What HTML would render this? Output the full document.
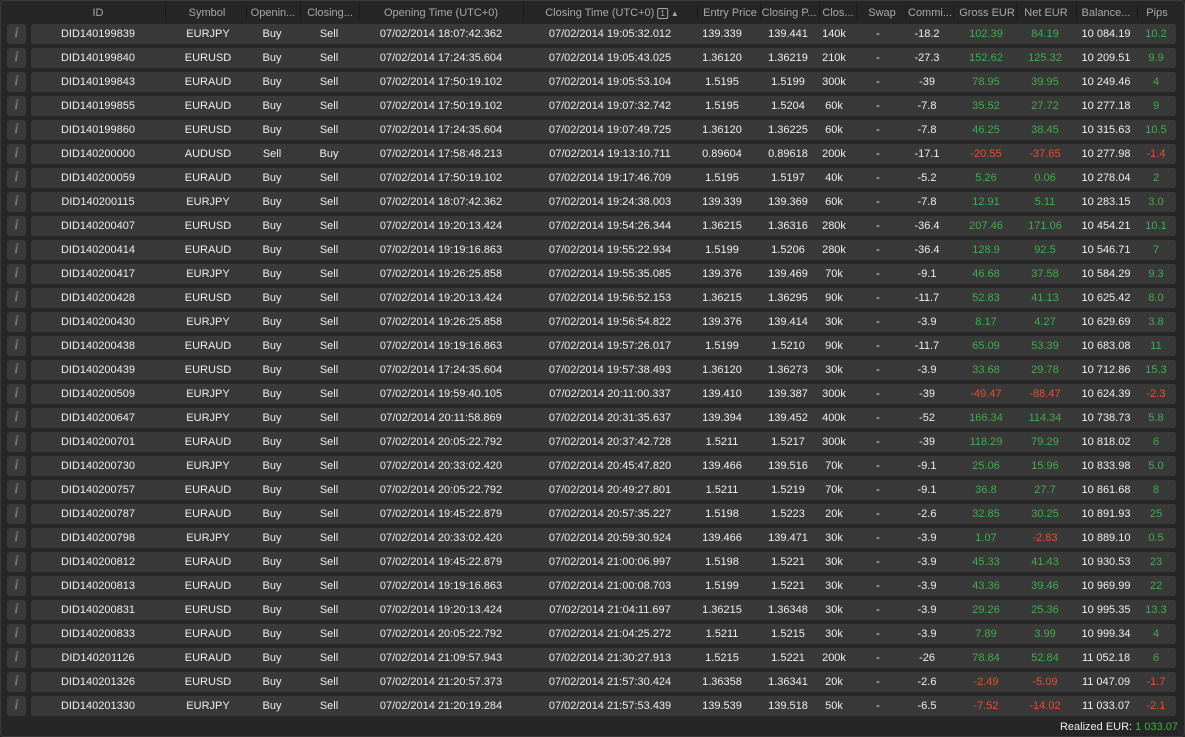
<!DOCTYPE html>
<html><head><meta charset="utf-8"><style>
body{margin:0;width:1185px;height:737px;background:#262626;font-family:"Liberation Sans",sans-serif;font-size:11px;color:#eee;overflow:hidden;position:relative}
.frame{position:absolute;left:0;top:0;width:1183px;height:735px;border:1px solid #3a3a3a;border-radius:4px}
.hdr{position:absolute;top:0;left:0;width:1185px;height:24px;color:#a8a8a8}
.hdr span{position:absolute;top:7px;transform:translateX(-50%);white-space:nowrap}
.sep{position:absolute;top:4px;width:1px;height:16px;background:#1a1a1a}
.r{position:absolute;left:0;width:1185px;height:20px}
.r i{position:absolute;left:7px;top:0;width:19px;height:20px;background:#3a3a3a;border-radius:3px;color:#777;font-family:"Liberation Serif",serif;font-size:14px;font-weight:bold;text-align:center;line-height:20px}
.r b{position:absolute;left:31px;top:0;width:1145px;height:20px;background:#393939;border-radius:3px}
.r span{position:absolute;top:4px;transform:translateX(-50%);white-space:nowrap}
.r span:nth-of-type(1){left:98px}.r span:nth-of-type(2){left:208px}.r span:nth-of-type(3){left:272px}.r span:nth-of-type(4){left:329px}.r span:nth-of-type(5){left:441px}.r span:nth-of-type(6){left:610px}.r span:nth-of-type(7){left:722px}.r span:nth-of-type(8){left:788px}.r span:nth-of-type(9){left:834px}.r span:nth-of-type(10){left:878px}.r span:nth-of-type(11){left:927px}.r span:nth-of-type(12){left:986px}.r span:nth-of-type(13){left:1045px}.r span:nth-of-type(14){left:1106px}.r span:nth-of-type(15){left:1156px}
.g{color:#3fae49}.d{color:#e5502f}
.foot{position:absolute;top:721px;right:7px;color:#eee}
</style></head><body>
<div class="frame"></div>
<div class="hdr">
<span style="left:98px">ID</span><div class="sep" style="left:165px"></div>
<span style="left:207px">Symbol</span><div class="sep" style="left:246px"></div>
<span style="left:273px">Openin...</span><div class="sep" style="left:300px"></div>
<span style="left:330px">Closing...</span><div class="sep" style="left:359px"></div>
<span style="left:441px">Opening Time (UTC+0)</span><div class="sep" style="left:523px"></div>
<span style="left:612px">Closing Time (UTC+0) <span style="position:relative;transform:none;top:0;border:1px solid #aaa;border-radius:2px;font-size:8px;padding:0 2px">1</span> <span style="position:relative;transform:none;top:0;font-size:8px">▲</span></span><div class="sep" style="left:697px"></div>
<span style="left:730px">Entry Price</span><div class="sep" style="left:760px"></div>
<span style="left:789px">Closing P...</span><div class="sep" style="left:819px"></div>
<span style="left:838px">Clos...</span><div class="sep" style="left:856px"></div>
<span style="left:882px">Swap</span><div class="sep" style="left:905px"></div>
<span style="left:930px">Commi...</span><div class="sep" style="left:953px"></div>
<span style="left:987px">Gross EUR</span><div class="sep" style="left:1016px"></div>
<span style="left:1046px">Net EUR</span><div class="sep" style="left:1076px"></div>
<span style="left:1106px">Balance...</span><div class="sep" style="left:1137px"></div>
<span style="left:1157px">Pips</span>
</div>
<div class="r" style="top:24px"><i>i</i><b></b><span>DID140199839</span><span>EURJPY</span><span>Buy</span><span>Sell</span><span>07/02/2014 18:07:42.362</span><span>07/02/2014 19:05:32.012</span><span>139.339</span><span>139.441</span><span>140k</span><span>-</span><span>-18.2</span><span class="g">102.39</span><span class="g">84.19</span><span>10 084.19</span><span class="g">10.2</span></div>
<div class="r" style="top:48px"><i>i</i><b></b><span>DID140199840</span><span>EURUSD</span><span>Buy</span><span>Sell</span><span>07/02/2014 17:24:35.604</span><span>07/02/2014 19:05:43.025</span><span>1.36120</span><span>1.36219</span><span>210k</span><span>-</span><span>-27.3</span><span class="g">152.62</span><span class="g">125.32</span><span>10 209.51</span><span class="g">9.9</span></div>
<div class="r" style="top:72px"><i>i</i><b></b><span>DID140199843</span><span>EURAUD</span><span>Buy</span><span>Sell</span><span>07/02/2014 17:50:19.102</span><span>07/02/2014 19:05:53.104</span><span>1.5195</span><span>1.5199</span><span>300k</span><span>-</span><span>-39</span><span class="g">78.95</span><span class="g">39.95</span><span>10 249.46</span><span class="g">4</span></div>
<div class="r" style="top:96px"><i>i</i><b></b><span>DID140199855</span><span>EURAUD</span><span>Buy</span><span>Sell</span><span>07/02/2014 17:50:19.102</span><span>07/02/2014 19:07:32.742</span><span>1.5195</span><span>1.5204</span><span>60k</span><span>-</span><span>-7.8</span><span class="g">35.52</span><span class="g">27.72</span><span>10 277.18</span><span class="g">9</span></div>
<div class="r" style="top:120px"><i>i</i><b></b><span>DID140199860</span><span>EURUSD</span><span>Buy</span><span>Sell</span><span>07/02/2014 17:24:35.604</span><span>07/02/2014 19:07:49.725</span><span>1.36120</span><span>1.36225</span><span>60k</span><span>-</span><span>-7.8</span><span class="g">46.25</span><span class="g">38.45</span><span>10 315.63</span><span class="g">10.5</span></div>
<div class="r" style="top:144px"><i>i</i><b></b><span>DID140200000</span><span>AUDUSD</span><span>Sell</span><span>Buy</span><span>07/02/2014 17:58:48.213</span><span>07/02/2014 19:13:10.711</span><span>0.89604</span><span>0.89618</span><span>200k</span><span>-</span><span>-17.1</span><span class="d">-20.55</span><span class="d">-37.65</span><span>10 277.98</span><span class="d">-1.4</span></div>
<div class="r" style="top:168px"><i>i</i><b></b><span>DID140200059</span><span>EURAUD</span><span>Buy</span><span>Sell</span><span>07/02/2014 17:50:19.102</span><span>07/02/2014 19:17:46.709</span><span>1.5195</span><span>1.5197</span><span>40k</span><span>-</span><span>-5.2</span><span class="g">5.26</span><span class="g">0.06</span><span>10 278.04</span><span class="g">2</span></div>
<div class="r" style="top:192px"><i>i</i><b></b><span>DID140200115</span><span>EURJPY</span><span>Buy</span><span>Sell</span><span>07/02/2014 18:07:42.362</span><span>07/02/2014 19:24:38.003</span><span>139.339</span><span>139.369</span><span>60k</span><span>-</span><span>-7.8</span><span class="g">12.91</span><span class="g">5.11</span><span>10 283.15</span><span class="g">3.0</span></div>
<div class="r" style="top:216px"><i>i</i><b></b><span>DID140200407</span><span>EURUSD</span><span>Buy</span><span>Sell</span><span>07/02/2014 19:20:13.424</span><span>07/02/2014 19:54:26.344</span><span>1.36215</span><span>1.36316</span><span>280k</span><span>-</span><span>-36.4</span><span class="g">207.46</span><span class="g">171.06</span><span>10 454.21</span><span class="g">10.1</span></div>
<div class="r" style="top:240px"><i>i</i><b></b><span>DID140200414</span><span>EURAUD</span><span>Buy</span><span>Sell</span><span>07/02/2014 19:19:16.863</span><span>07/02/2014 19:55:22.934</span><span>1.5199</span><span>1.5206</span><span>280k</span><span>-</span><span>-36.4</span><span class="g">128.9</span><span class="g">92.5</span><span>10 546.71</span><span class="g">7</span></div>
<div class="r" style="top:264px"><i>i</i><b></b><span>DID140200417</span><span>EURJPY</span><span>Buy</span><span>Sell</span><span>07/02/2014 19:26:25.858</span><span>07/02/2014 19:55:35.085</span><span>139.376</span><span>139.469</span><span>70k</span><span>-</span><span>-9.1</span><span class="g">46.68</span><span class="g">37.58</span><span>10 584.29</span><span class="g">9.3</span></div>
<div class="r" style="top:288px"><i>i</i><b></b><span>DID140200428</span><span>EURUSD</span><span>Buy</span><span>Sell</span><span>07/02/2014 19:20:13.424</span><span>07/02/2014 19:56:52.153</span><span>1.36215</span><span>1.36295</span><span>90k</span><span>-</span><span>-11.7</span><span class="g">52.83</span><span class="g">41.13</span><span>10 625.42</span><span class="g">8.0</span></div>
<div class="r" style="top:312px"><i>i</i><b></b><span>DID140200430</span><span>EURJPY</span><span>Buy</span><span>Sell</span><span>07/02/2014 19:26:25.858</span><span>07/02/2014 19:56:54.822</span><span>139.376</span><span>139.414</span><span>30k</span><span>-</span><span>-3.9</span><span class="g">8.17</span><span class="g">4.27</span><span>10 629.69</span><span class="g">3.8</span></div>
<div class="r" style="top:336px"><i>i</i><b></b><span>DID140200438</span><span>EURAUD</span><span>Buy</span><span>Sell</span><span>07/02/2014 19:19:16.863</span><span>07/02/2014 19:57:26.017</span><span>1.5199</span><span>1.5210</span><span>90k</span><span>-</span><span>-11.7</span><span class="g">65.09</span><span class="g">53.39</span><span>10 683.08</span><span class="g">11</span></div>
<div class="r" style="top:360px"><i>i</i><b></b><span>DID140200439</span><span>EURUSD</span><span>Buy</span><span>Sell</span><span>07/02/2014 17:24:35.604</span><span>07/02/2014 19:57:38.493</span><span>1.36120</span><span>1.36273</span><span>30k</span><span>-</span><span>-3.9</span><span class="g">33.68</span><span class="g">29.78</span><span>10 712.86</span><span class="g">15.3</span></div>
<div class="r" style="top:384px"><i>i</i><b></b><span>DID140200509</span><span>EURJPY</span><span>Buy</span><span>Sell</span><span>07/02/2014 19:59:40.105</span><span>07/02/2014 20:11:00.337</span><span>139.410</span><span>139.387</span><span>300k</span><span>-</span><span>-39</span><span class="d">-49.47</span><span class="d">-88.47</span><span>10 624.39</span><span class="d">-2.3</span></div>
<div class="r" style="top:408px"><i>i</i><b></b><span>DID140200647</span><span>EURJPY</span><span>Buy</span><span>Sell</span><span>07/02/2014 20:11:58.869</span><span>07/02/2014 20:31:35.637</span><span>139.394</span><span>139.452</span><span>400k</span><span>-</span><span>-52</span><span class="g">166.34</span><span class="g">114.34</span><span>10 738.73</span><span class="g">5.8</span></div>
<div class="r" style="top:432px"><i>i</i><b></b><span>DID140200701</span><span>EURAUD</span><span>Buy</span><span>Sell</span><span>07/02/2014 20:05:22.792</span><span>07/02/2014 20:37:42.728</span><span>1.5211</span><span>1.5217</span><span>300k</span><span>-</span><span>-39</span><span class="g">118.29</span><span class="g">79.29</span><span>10 818.02</span><span class="g">6</span></div>
<div class="r" style="top:456px"><i>i</i><b></b><span>DID140200730</span><span>EURJPY</span><span>Buy</span><span>Sell</span><span>07/02/2014 20:33:02.420</span><span>07/02/2014 20:45:47.820</span><span>139.466</span><span>139.516</span><span>70k</span><span>-</span><span>-9.1</span><span class="g">25.06</span><span class="g">15.96</span><span>10 833.98</span><span class="g">5.0</span></div>
<div class="r" style="top:480px"><i>i</i><b></b><span>DID140200757</span><span>EURAUD</span><span>Buy</span><span>Sell</span><span>07/02/2014 20:05:22.792</span><span>07/02/2014 20:49:27.801</span><span>1.5211</span><span>1.5219</span><span>70k</span><span>-</span><span>-9.1</span><span class="g">36.8</span><span class="g">27.7</span><span>10 861.68</span><span class="g">8</span></div>
<div class="r" style="top:504px"><i>i</i><b></b><span>DID140200787</span><span>EURAUD</span><span>Buy</span><span>Sell</span><span>07/02/2014 19:45:22.879</span><span>07/02/2014 20:57:35.227</span><span>1.5198</span><span>1.5223</span><span>20k</span><span>-</span><span>-2.6</span><span class="g">32.85</span><span class="g">30.25</span><span>10 891.93</span><span class="g">25</span></div>
<div class="r" style="top:528px"><i>i</i><b></b><span>DID140200798</span><span>EURJPY</span><span>Buy</span><span>Sell</span><span>07/02/2014 20:33:02.420</span><span>07/02/2014 20:59:30.924</span><span>139.466</span><span>139.471</span><span>30k</span><span>-</span><span>-3.9</span><span class="g">1.07</span><span class="d">-2.83</span><span>10 889.10</span><span class="g">0.5</span></div>
<div class="r" style="top:552px"><i>i</i><b></b><span>DID140200812</span><span>EURAUD</span><span>Buy</span><span>Sell</span><span>07/02/2014 19:45:22.879</span><span>07/02/2014 21:00:06.997</span><span>1.5198</span><span>1.5221</span><span>30k</span><span>-</span><span>-3.9</span><span class="g">45.33</span><span class="g">41.43</span><span>10 930.53</span><span class="g">23</span></div>
<div class="r" style="top:576px"><i>i</i><b></b><span>DID140200813</span><span>EURAUD</span><span>Buy</span><span>Sell</span><span>07/02/2014 19:19:16.863</span><span>07/02/2014 21:00:08.703</span><span>1.5199</span><span>1.5221</span><span>30k</span><span>-</span><span>-3.9</span><span class="g">43.36</span><span class="g">39.46</span><span>10 969.99</span><span class="g">22</span></div>
<div class="r" style="top:600px"><i>i</i><b></b><span>DID140200831</span><span>EURUSD</span><span>Buy</span><span>Sell</span><span>07/02/2014 19:20:13.424</span><span>07/02/2014 21:04:11.697</span><span>1.36215</span><span>1.36348</span><span>30k</span><span>-</span><span>-3.9</span><span class="g">29.26</span><span class="g">25.36</span><span>10 995.35</span><span class="g">13.3</span></div>
<div class="r" style="top:624px"><i>i</i><b></b><span>DID140200833</span><span>EURAUD</span><span>Buy</span><span>Sell</span><span>07/02/2014 20:05:22.792</span><span>07/02/2014 21:04:25.272</span><span>1.5211</span><span>1.5215</span><span>30k</span><span>-</span><span>-3.9</span><span class="g">7.89</span><span class="g">3.99</span><span>10 999.34</span><span class="g">4</span></div>
<div class="r" style="top:648px"><i>i</i><b></b><span>DID140201126</span><span>EURAUD</span><span>Buy</span><span>Sell</span><span>07/02/2014 21:09:57.943</span><span>07/02/2014 21:30:27.913</span><span>1.5215</span><span>1.5221</span><span>200k</span><span>-</span><span>-26</span><span class="g">78.84</span><span class="g">52.84</span><span>11 052.18</span><span class="g">6</span></div>
<div class="r" style="top:672px"><i>i</i><b></b><span>DID140201326</span><span>EURUSD</span><span>Buy</span><span>Sell</span><span>07/02/2014 21:20:57.373</span><span>07/02/2014 21:57:30.424</span><span>1.36358</span><span>1.36341</span><span>20k</span><span>-</span><span>-2.6</span><span class="d">-2.49</span><span class="d">-5.09</span><span>11 047.09</span><span class="d">-1.7</span></div>
<div class="r" style="top:696px"><i>i</i><b></b><span>DID140201330</span><span>EURJPY</span><span>Buy</span><span>Sell</span><span>07/02/2014 21:20:19.284</span><span>07/02/2014 21:57:53.439</span><span>139.539</span><span>139.518</span><span>50k</span><span>-</span><span>-6.5</span><span class="d">-7.52</span><span class="d">-14.02</span><span>11 033.07</span><span class="d">-2.1</span></div>
<div class="foot">Realized EUR: <span class="g">1 033.07</span></div>
</body></html>
